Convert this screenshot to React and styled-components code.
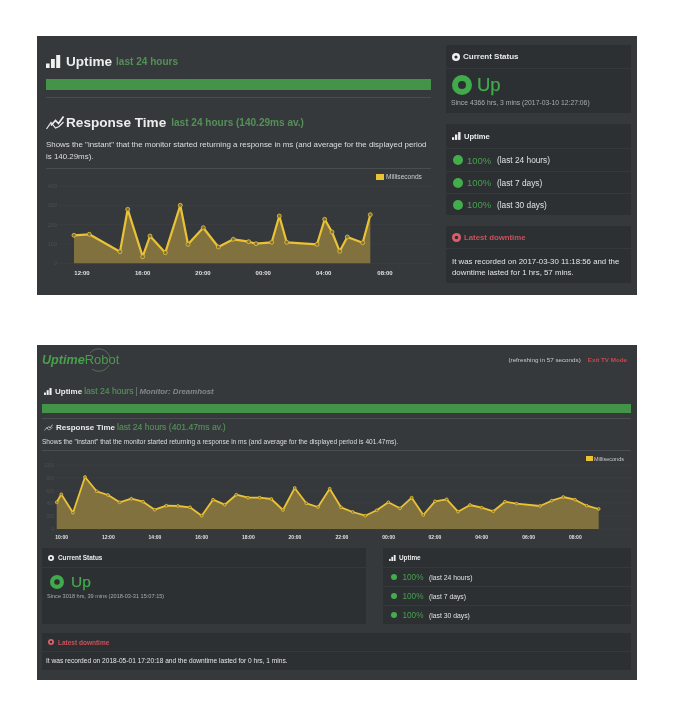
import React from "react";
import styled, { createGlobalStyle } from "styled-components";

const Global = createGlobalStyle`
  html, body { margin: 0; padding: 0; background: #fff; }
  body { font-family: "Liberation Sans", Arial, sans-serif; color: #e6e8e8; }
`;

const Page = styled.div`
  width: 688px;
  height: 718px;
  padding: 36px 0 0 37px;
  box-sizing: border-box;
  overflow: hidden;
  display: flex;
  flex-direction: column;
  gap: 50px;
`;

const Panel = styled.section`
  width: 600px;
  background: #36393c;
  box-sizing: border-box;
  filter: blur(0.35px);
`;

const TopPanel = styled(Panel)`
  height: 259px;
  display: grid;
  grid-template-columns: 385px 185px;
  column-gap: 15px;
  padding: 9px 0 0 9px;
`;

const BottomPanel = styled(Panel)`
  height: 335px;
  padding: 0 6px 0 5px;
`;

const Column = styled.div`
  display: flex;
  flex-direction: column;
  min-width: 0;
`;

const LargeTitle = styled.h2`
  margin: ${(p) => p.$margin};
  display: flex;
  align-items: center;
  height: 16px;
  font-size: 13.6px;
  font-weight: 700;
  color: #eceeee;
  white-space: nowrap;
  svg { margin-right: ${(p) => p.$iconGap}; flex: none; }
`;

const LargeSub = styled.span`
  margin-left: ${(p) => p.$gap};
  font-size: 10.05px;
  color: #559058;
`;

const Bar = styled.div`
  height: ${(p) => p.$height}px;
  margin-top: ${(p) => p.$top}px;
  background: #439449;
`;

const Rule = styled.hr`
  margin: ${(p) => p.$margin};
  border: 0;
  border-top: 1px solid #4a4d50;
`;

const Description = styled.p`
  margin: 9px 0 0;
  font-size: 7.92px;
  line-height: 12px;
  color: #dcdede;
`;

const ChartSvg = styled.svg`
  display: block;
  width: ${(p) => p.$w}px;
  height: ${(p) => p.$h}px;
`;

const AxisText = styled.text`
  font-family: "Liberation Sans", Arial, sans-serif;
  font-size: ${(p) => p.$size}px;
  fill: ${(p) => p.$fill};
  font-weight: ${(p) => p.$weight || 400};
`;

const Card = styled.div`
  display: flex;
  flex-direction: column;
  gap: 1px;
  margin-bottom: ${(p) => p.$after || 0}px;
`;

const Block = styled.div`
  height: ${(p) => (p.$height ? `${p.$height}px` : "auto")};
  ${(p) => p.$grow && "flex: 1;"}
  box-sizing: border-box;
  padding: ${(p) => p.$pad || "0 6px"};
  display: flex;
  ${(p) => (p.$stack ? "flex-direction: column;" : "align-items: center;")}
  background-color: #2d3033;
  background-image: radial-gradient(#34373a 0.5px, transparent 0.6px);
  background-size: 2px 2px;
`;

const CardTitle = styled.h3`
  margin: 0;
  display: flex;
  align-items: center;
  gap: ${(p) => p.$gap || 3}px;
  font-size: ${(p) => p.$size}px;
  font-weight: 700;
  color: ${(p) => p.$color || "#e8eaea"};
  white-space: nowrap;
`;

const StatusRow = styled.div`
  display: flex;
  align-items: center;
  gap: ${(p) => p.$gap}px;
  margin-left: ${(p) => p.$inset || 0}px;
`;

const StatusWord = styled.span`
  font-size: ${(p) => p.$size}px;
  line-height: 1;
  color: #41ab4b;
  -webkit-text-stroke: 0.25px #41ab4b;
`;

const Since = styled.div`
  margin-top: ${(p) => p.$top}px;
  font-size: ${(p) => p.$size}px;
  line-height: 1.2;
  color: #a9acae;
  white-space: nowrap;
`;

const Dot = styled.span`
  flex: none;
  width: ${(p) => p.$size}px;
  height: ${(p) => p.$size}px;
  border-radius: 50%;
  background: #43ad4c;
`;

const Percent = styled.span`
  font-size: ${(p) => p.$size}px;
  color: #45a04d;
  width: ${(p) => p.$w}px;
`;

const Period = styled.span`
  font-size: ${(p) => p.$size}px;
  color: #dfe1e1;
`;

const Body = styled.p`
  margin: 0;
  font-size: ${(p) => p.$size}px;
  line-height: ${(p) => p.$lh}px;
  color: #e2e4e4;
`;

const Masthead = styled.header`
  height: 37px;
  box-sizing: border-box;
  padding: 0 4px 8px 0;
  display: flex;
  align-items: center;
  justify-content: space-between;
`;

const Logo = styled.div`
  position: relative;
  font-size: 13px;
  white-space: nowrap;
  color: #4b9a50;
`;

const LogoStrong = styled.b`
  font-style: italic;
  font-size: 12.6px;
  color: #46a04c;
`;

const LogoRing = styled.svg`
  position: absolute;
  left: 45px;
  top: -4px;
  width: 24px;
  height: 24px;
`;

const Refresh = styled.div`
  font-size: 6.25px;
  color: #c9cbcb;
  display: flex;
  gap: 7px;
`;

const Exit = styled.span`
  font-weight: 700;
  color: #c9474f;
`;

const SmallTitle = styled.h2`
  margin: ${(p) => p.$margin};
  display: flex;
  align-items: center;
  height: 10px;
  font-size: 8px;
  font-weight: 700;
  color: #e8eaea;
  white-space: nowrap;
  svg { margin-right: 3px; flex: none; }
`;

const SmallSub = styled.span`
  margin-left: 2px;
  font-weight: 400;
  font-size: 8.65px;
  color: #559058;
  -webkit-text-stroke: 0.15px #559058;
`;

const Monitor = styled.span`
  margin-left: 2px;
  padding-left: 3px;
  border-left: 1px solid #6b6e70;
  font-size: 7.8px;
  font-style: italic;
  color: #85888a;
`;

const SmallDescription = styled.p`
  margin: 5px 0 0;
  font-size: 6.55px;
  line-height: 8px;
  color: #dcdede;
  white-space: nowrap;
`;

const TwoCards = styled.div`
  display: grid;
  grid-template-columns: 324px 248px;
  column-gap: 17px;
  margin-bottom: 9px;
`;

const BarsIcon = ({ size = 15, h = 13 }) => (
  <svg width={size} height={h} viewBox="0 0 15 13" fill="#f0f0f0">
    <rect x="0" y="8.5" width="3.6" height="4.5" />
    <rect x="5" y="4" width="3.8" height="9" />
    <rect x="10.2" y="0" width="4" height="13" />
  </svg>
);

const TrendIcon = ({ w = 18, h = 15 }) => (
  <svg width={w} height={h} viewBox="0 0 18 15" fill="none" stroke="#f0f0f0">
    <path d="M5 10.5 L9.5 5.5 L12.5 8.5 L17.5 1.5" strokeWidth="1.6" />
    <path d="M0.5 14 L5 7.5 L9.5 13 L13 11.5 L17.5 7" strokeWidth="1.1" />
  </svg>
);

const TargetIcon = ({ size, color = "#f0f0f0", hole = "#2d3033" }) => (
  <svg width={size} height={size} viewBox="0 0 20 20" style={{ flex: "none" }}>
    <circle cx="10" cy="10" r="10" fill={color} />
    <circle cx="10" cy="10" r="4" fill={hole} />
  </svg>
);

const TOP_POINTS = [
  [74, 234.3], [89.3, 233.3], [120, 250.7], [127.7, 208.3], [142.7, 255.7], [150, 235],
  [165.3, 251.7], [180.3, 204.3], [188, 243.3], [203.3, 226.7], [218.3, 246], [233.3, 238.3],
  [248.7, 240.7], [256, 242.7], [271.7, 241.3], [279.3, 215], [286.7, 241.3], [317, 243.3],
  [324.7, 218.3], [332, 231], [339.7, 250.3], [347.3, 236], [362.7, 241.7], [370.3, 213.7],
];

const BOTTOM_POINTS = [
  [56.7, 502.3], [61.3, 494.3], [73, 512.7], [85, 477], [96.7, 491.3], [108, 495], [119.7, 502.3],
  [131.3, 498.7], [143, 501.7], [154.7, 509.7], [166.3, 505.7], [178, 506], [190, 507.3],
  [201.7, 515.7], [213, 499.7], [224.7, 504.7], [236.3, 494.7], [248, 497.7], [259.7, 497.7],
  [271.3, 499], [283, 510], [294.7, 488], [306.3, 503.3], [318, 507], [329.7, 488.7], [341, 507.3],
  [352.7, 512], [365.3, 515.7], [376.7, 510.3], [388.3, 502.3], [400, 508.3], [411.7, 497.7],
  [423.3, 515], [435, 501.3], [446.7, 499.3], [458, 511.7], [470, 505], [481.7, 507.7],
  [493.3, 511.3], [505, 501.7], [516.7, 503.7], [540, 506], [551.7, 500.7], [563.3, 497],
  [575, 499.7], [586.7, 505.7], [598.7, 509],
];

const Chart = ({ box, points, base, grid, gridX, yLabels, yX, xLabels, xY, legend, stroke, dot, labelSize, ySize }) => {
  const [, , w, h] = box;
  const line = points.map((p) => p.join(",")).join(" ");
  const area = `${points[0][0]},${base} ${line} ${points[points.length - 1][0]},${base}`;
  return (
    <ChartSvg $w={w} $h={h} viewBox={box.join(" ")}>
      {grid.map((g) => (
        <line key={g} x1={gridX[0]} x2={gridX[1]} y1={g} y2={g} stroke="#3f4245" strokeWidth="0.6" />
      ))}
      {yLabels.map((l, i) => (
        <AxisText key={l} x={yX} y={grid[i] + 2} $size={ySize} $fill="#4b4e51" textAnchor="end">{l}</AxisText>
      ))}
      <polygon points={area} fill="#81713f" />
      <polyline points={line} fill="none" stroke="#e9c235" strokeWidth={stroke} strokeLinejoin="round" />
      {points.map((p) => (
        <circle key={p[0]} cx={p[0]} cy={p[1]} r={dot} fill="#81713f" stroke="#e9c235" strokeWidth="0.8" />
      ))}
      {xLabels.map(([t, lx]) => (
        <AxisText key={t} x={lx} y={xY} $size={labelSize} $fill="#dfe0e0" $weight={700} textAnchor="middle">{t}</AxisText>
      ))}
      <rect x={legend.x} y={legend.y} width={legend.w} height={legend.h} fill="#e9c235" />
      <AxisText x={legend.tx} y={legend.ty} $size={legend.size} $fill="#c9cbcb">Milliseconds</AxisText>
    </ChartSvg>
  );
};

const TOP_ROWS = ["(last 24 hours)", "(last 7 days)", "(last 30 days)"];

export default function App() {
  return (
    <>
      <Global />
      <Page>
        <TopPanel>
          <Column>
            <LargeTitle $margin="8px 0 0" $iconGap="5px">
              <BarsIcon />
              Uptime
              <LargeSub $gap="4px">last 24 hours</LargeSub>
            </LargeTitle>
            <Bar $height={11} $top={10} />
            <Rule $margin="7px 0 16px" />
            <LargeTitle $margin="0" $iconGap="2px">
              <TrendIcon />
              Response Time
              <LargeSub $gap="5px">last 24 hours (140.29ms av.)</LargeSub>
            </LargeTitle>
            <Description>
              Shows the "instant" that the monitor started returning a response in ms (and average for the displayed period is 140.29ms).
            </Description>
            <Rule $margin="5px 0 0" />
            <Chart
              box={[46, 168, 385, 110]}
              points={TOP_POINTS}
              base={262.3}
              grid={[185, 204.3, 223.7, 243, 262.3]}
              gridX={[59, 431]}
              yLabels={["400", "300", "200", "100", "0"]}
              yX={57}
              ySize={5.5}
              xLabels={[["12:00", 82], ["16:00", 142.7], ["20:00", 203], ["00:00", 263.3], ["04:00", 323.7], ["08:00", 385]]}
              xY={274}
              labelSize={6}
              stroke={2.2}
              dot={2}
              legend={{ x: 376, y: 173, w: 8, h: 6, tx: 386, ty: 178.3, size: 6.6 }}
            />
          </Column>
          <Column>
            <Card $after={11}>
              <Block $height={23}>
                <CardTitle $size={8}><TargetIcon size={8} />Current Status</CardTitle>
              </Block>
              <Block $height={44} $stack $pad="6px 5px 0">
                <StatusRow $gap={5} $inset={1}>
                  <TargetIcon size={20} color="#41ab4b" />
                  <StatusWord $size={18.5}>Up</StatusWord>
                </StatusRow>
                <Since $size={6.8} $top={4}>Since 4366 hrs, 3 mins (2017-03-10 12:27:06)</Since>
              </Block>
            </Card>
            <Card $after={11}>
              <Block $height={24}>
                <CardTitle $size={7.6}><BarsIcon size={9} h={8} />Uptime</CardTitle>
              </Block>
              {TOP_ROWS.map((label, i) => (
                <Block key={label} $height={i === 0 ? 22 : 21} $pad="0 7px">
                  <StatusRow $gap={4}>
                    <Dot $size={10} />
                    <Percent $size={9.5} $w={26}>100%</Percent>
                    <Period $size={8.3}>{label}</Period>
                  </StatusRow>
                </Block>
              ))}
            </Card>
            <Card>
              <Block $height={22}>
                <CardTitle $size={7.8} $color="#c9505a"><TargetIcon size={9} color="#d9606a" />Latest downtime</CardTitle>
              </Block>
              <Block $height={34} $stack $pad="7px 6px 0">
                <Body $size={7.85} $lh={11}>It was recorded on 2017-03-30 11:18:56 and the downtime lasted for 1 hrs, 57 mins.</Body>
              </Block>
            </Card>
          </Column>
        </TopPanel>

        <BottomPanel>
          <Masthead>
            <Logo>
              <LogoStrong>Uptime</LogoStrong>Robot
              <LogoRing viewBox="0 0 24 24" fill="none" stroke="#6a8f6c" strokeWidth="0.6">
                <path d="M3 5 A11.5 11.5 0 0 1 23 10" />
                <path d="M22 17 A11.5 11.5 0 0 1 5 21" />
              </LogoRing>
            </Logo>
            <Refresh>
              <span>(refreshing in 57 seconds)</span>
              <Exit>Exit TV Mode</Exit>
            </Refresh>
          </Masthead>
          <SmallTitle $margin="4px 0 0 2px">
            <BarsIcon size={8} h={7} />
            Uptime
            <SmallSub>last 24 hours</SmallSub>
            <Monitor>Monitor: <b>Dreamhost</b></Monitor>
          </SmallTitle>
          <Bar $height={9} $top={8} />
          <Rule $margin="5px 0 3px" />
          <SmallTitle $margin="0 0 0 2px">
            <TrendIcon w={9} h={7} />
            Response Time
            <SmallSub>last 24 hours (401.47ms av.)</SmallSub>
          </SmallTitle>
          <SmallDescription style={{ marginTop: 6 }}>Shows the "instant" that the monitor started returning a response in ms (and average for the displayed period is 401.47ms).</SmallDescription>
          <Rule $margin="4px 0 0" />
          <Chart
            box={[42, 451, 589, 97]}
            points={BOTTOM_POINTS}
            base={529}
            grid={[465, 478, 491, 503, 516, 529]}
            gridX={[55, 631]}
            yLabels={["1000", "800", "600", "400", "200", "0"]}
            yX={54}
            ySize={4.5}
            xLabels={[["10:00", 61.7], ["12:00", 108.3], ["14:00", 155], ["16:00", 201.7], ["18:00", 248.3], ["20:00", 295], ["22:00", 342], ["00:00", 388.7], ["02:00", 435], ["04:00", 481.7], ["06:00", 528.7], ["08:00", 575.3]]}
            xY={538.5}
            labelSize={5}
            stroke={1.8}
            dot={1.4}
            legend={{ x: 586, y: 456, w: 7, h: 5, tx: 594, ty: 460.5, size: 5.5 }}
          />
          <TwoCards>
            <Card>
              <Block $height={19}>
                <CardTitle $size={6.4} $gap={4}><TargetIcon size={6} />Current Status</CardTitle>
              </Block>
              <Block $grow $stack $pad="6px 5px 0">
                <StatusRow $gap={7} $inset={3}>
                  <TargetIcon size={14} color="#41ab4b" />
                  <StatusWord $size={15.5}>Up</StatusWord>
                </StatusRow>
                <Since $size={5.6} $top={3}>Since 3018 hrs, 39 mins (2018-03-31 15:07:15)</Since>
              </Block>
            </Card>
            <Card>
              <Block $height={19}>
                <CardTitle $size={6.4} $gap={3}><BarsIcon size={7} h={6} />Uptime</CardTitle>
              </Block>
              {TOP_ROWS.map((label) => (
                <Block key={label} $height={18} $pad="0 8px">
                  <StatusRow $gap={5.5}>
                    <Dot $size={6} />
                    <Percent $size={8.2} $w={21}>100%</Percent>
                    <Period $size={6.8}>{label}</Period>
                  </StatusRow>
                </Block>
              ))}
            </Card>
          </TwoCards>
          <Card>
            <Block $height={18}>
              <CardTitle $size={6.5} $gap={4} $color="#c9505a"><TargetIcon size={6} color="#d9606a" />Latest downtime</CardTitle>
            </Block>
            <Block $height={18} $pad="0 4px">
              <Body $size={6.6} $lh={8}>It was recorded on 2018-05-01 17:20:18 and the downtime lasted for 0 hrs, 1 mins.</Body>
            </Block>
          </Card>
        </BottomPanel>
      </Page>
    </>
  );
}
